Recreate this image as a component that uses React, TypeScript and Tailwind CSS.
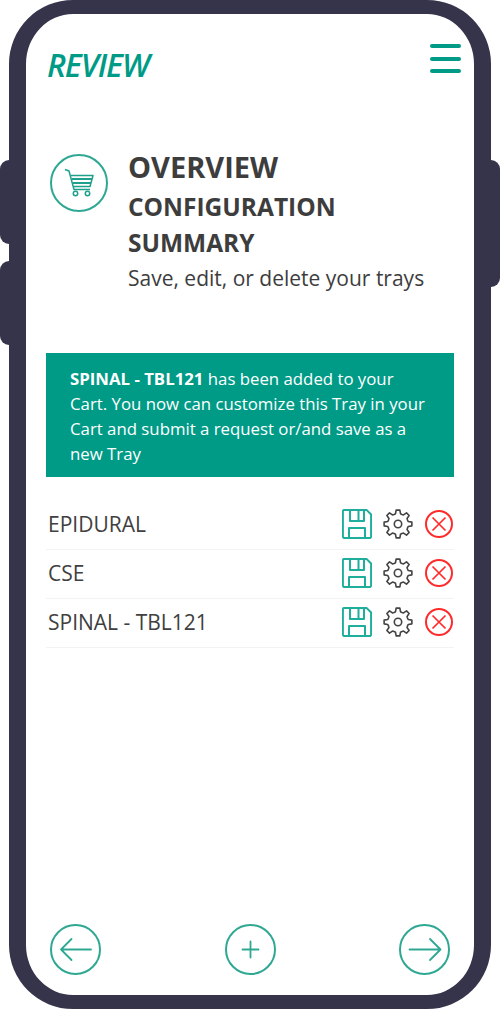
const RED = "#ff2a2a";

// 8 tooth gear outline, same as the one in the tray rows
function gearPath() {
  const pts: string[] = [];
  const teeth = 8;
  for (let i = 0; i < teeth; i++) {
    const a = (i / teeth) * Math.PI * 2 - Math.PI / 2;
    const step = (Math.PI * 2) / teeth;
    const list: [number, number][] = [
      [10.3, a - step * 0.5],
      [10.6, a - step * 0.3],
      [14, a - step * 0.17],
      [14, a + step * 0.17],
      [10.6, a + step * 0.3],
    ];
    for (const [r, t] of list) {
      pts.push(`${(15 + r * Math.cos(t)).toFixed(2)} ${(15 + r * Math.sin(t)).toFixed(2)}`);
    }
  }
  return "M" + pts.join("L") + "Z";
}

function SaveIcon() {
  return (
    <svg width="30" height="30" viewBox="0 0 30 30" fill="none" stroke="#1fae9b" strokeWidth="2" strokeLinejoin="round">
      <path d="M2 0.9H24.5L29.1 5.5V27.6a1.5 1.5 0 0 1-1.5 1.5H2.4a1.5 1.5 0 0 1-1.5-1.5V2.4a1.5 1.5 0 0 1 1.1-1.5Z" />
      <path d="M8 1V12H22V1" />
      <path d="M16.500 1V12" />
      <path d="M7 29V19H23V29" />
    </svg>
  );
}

function GearIcon() {
  return (
    <svg width="30" height="30" viewBox="0 0 30 30" fill="none" stroke="#444444" strokeWidth="1.6" strokeLinejoin="round">
      <path d={gearPath()} />
      <circle cx="15" cy="15" r="3.7" />
    </svg>
  );
}

function CloseIcon() {
  return (
    <svg width="28" height="28" viewBox="0 0 28 28" fill="none" stroke={RED} strokeWidth="2">
      <circle cx="14" cy="14" r="13" />
      <path d="M7.500 7.500L20.500 20.500M20.500 7.500L7.500 20.500" strokeWidth="1.7" />
    </svg>
  );
}

function CartIcon() {
  return (
    <svg width="30" height="30" viewBox="0 0 30 30" fill="none" stroke="#1fa08d" strokeWidth="1.5" strokeLinejoin="round">
      <path d="M1 1.500L5 3L10 21.500H26" />
      <path d="M7 7.500H29L26 18.500H10" />
      <path d="M8 11H28M9 15H27" strokeWidth="2.200" />
      <circle cx="11.500" cy="25.500" r="2.200" />
      <circle cx="23.500" cy="25.500" r="2.200" />
    </svg>
  );
}

function TrayRow({ name }: { name: string }) {
  return (
    <div className="flex h-[49px] items-center border-b border-[#f3f3f3] pl-[2px] pr-[1px]">
      <span className="flex-1 text-[21px] text-[#404040]">{name}</span>
      <div className="flex items-center pb-[2px]">
        <SaveIcon />
        <div className="ml-[11px]">
          <GearIcon />
        </div>
        <div className="ml-[12px]">
          <CloseIcon />
        </div>
      </div>
    </div>
  );
}

function RoundButton({ children }: { children: React.ReactNode }) {
  return (
    <button className="flex h-[51px] w-[51px] items-center justify-center rounded-full border-2 border-[#2fa893]">
      <svg width="47" height="47" viewBox="0 0 47 47" fill="none" stroke="#2fa893" strokeWidth="1.800" strokeLinecap="round" strokeLinejoin="round">
        {children}
      </svg>
    </button>
  );
}

export default function App() {
  return (
    <div className="relative h-[1009px] w-[500px] overflow-hidden bg-white px-[9px] font-['Open_Sans',sans-serif]">
      {/* side buttons */}
      <div className="absolute left-0 top-[160px] h-[84px] w-[14px] rounded-l-[9px] bg-[#36344a]" />
      <div className="absolute left-0 top-[261px] h-[84px] w-[14px] rounded-l-[9px] bg-[#36344a]" />
      <div className="absolute right-0 top-[160px] h-[127px] w-[14px] rounded-r-[9px] bg-[#36344a]" />

      <div className="relative flex h-full flex-col rounded-[64px] border-x-[17px] border-y-[14px] border-[#36344a] bg-white">
        <header className="flex items-start justify-between pl-[21px] pr-[13px] pt-[30px]">
          <h1 className="mt-[-5px] text-[32px] font-semibold italic leading-[52px] tracking-[-1.1px] text-[#009b87]">REVIEW</h1>
          <div className="flex w-[31px] flex-col gap-[8.500px]">
            <span className="h-[4px] rounded-full bg-[#009b87]" />
            <span className="h-[4px] rounded-full bg-[#009b87]" />
            <span className="h-[4px] rounded-full bg-[#009b87]" />
          </div>
        </header>

        <section className="mt-[56px] flex pl-[24px]">
          <div className="mt-[7px] flex h-[58px] w-[58px] shrink-0 items-center justify-center rounded-full border-2 border-[#2fa893]">
            <CartIcon />
          </div>
          <div className="ml-[20px] text-[#3d3d3d]">
            <h2 className="mb-[2px] text-[29px] font-bold leading-[40px]">OVERVIEW</h2>
            <h3 className="text-[24.500px] font-bold leading-[36px]">
              CONFIGURATION
              <br />
              SUMMARY
            </h3>
            <p className="text-[21px] leading-[34px]">Save, edit, or delete your trays</p>
          </div>
        </section>

        <div className="mx-[20px] mt-[58px] bg-[#009b87] px-[24px] pb-[11px] pt-[13px] text-[16.800px] leading-[25px] text-white">
          <strong className="font-bold">SPINAL - TBL121</strong> has been added to your Cart. You now can customize this Tray in your Cart and submit a request or/and save as a new Tray
        </div>

        <div className="mx-[20px] mt-[24px]">
          <TrayRow name="EPIDURAL" />
          <TrayRow name="CSE" />
          <TrayRow name="SPINAL - TBL121" />
        </div>

        <footer className="mt-auto flex items-center justify-between pb-[20px] pl-[24px] pr-[24px]">
          <RoundButton>
            <path d="M39 23.500H9M19.500 13L9 23.500L19.500 34" />
          </RoundButton>
          <RoundButton>
            <path d="M23.500 15.500V31.500M15.500 23.500H31.500" />
          </RoundButton>
          <RoundButton>
            <path d="M8.500 23.500H39.500M29 13L39.500 23.500L29 34" />
          </RoundButton>
        </footer>
      </div>
    </div>
  );
}
